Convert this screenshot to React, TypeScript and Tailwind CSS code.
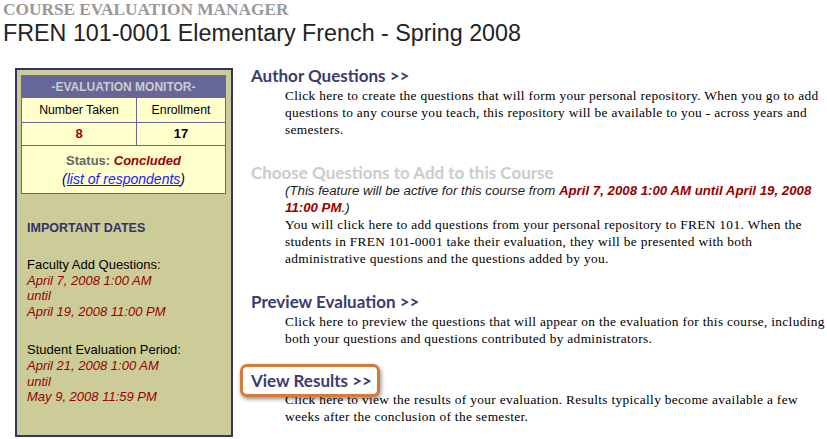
import React from "react";

const serif = { fontFamily: '"Liberation Serif", "Times New Roman", serif' };
const sans = { fontFamily: '"Liberation Sans", Arial, sans-serif' };
const head = { fontFamily: 'Lato, "Open Sans", sans-serif' };

function Heading({ children, gray }: { children: React.ReactNode; gray?: boolean }) {
  return (
    <div
      className={`text-[17px] font-bold leading-[18px] ${gray ? "text-[#cccccc]" : "text-[#3b3b6d]"}`}
      style={head}
    >
      {children}
    </div>
  );
}

function Body({ children, className = "" }: { children: React.ReactNode; className?: string }) {
  return (
    <div
      className={`ml-[34px] w-[544px] text-[13.4px] leading-[17px] tracking-[0.32px] text-black ${className}`}
      style={serif}
    >
      {children}
    </div>
  );
}

export default function App() {
  return (
    <div className="relative h-[439px] w-[827px] overflow-hidden bg-white">
      <div className="pl-[3px]">
        <div className="text-[17.3px] font-bold leading-[19px] text-[#999999]" style={serif}>
          COURSE EVALUATION MANAGER
        </div>
        <div className="mt-[0.5px] text-[23.3px] leading-[26px] text-[#222222]" style={sans}>
          FREN 101-0001 Elementary French - Spring 2008
        </div>
      </div>

      <div className="mt-[22.5px] flex items-start">
        {/* Sidebar */}
        <div
          className="ml-[15px] h-[369px] w-[218px] shrink-0 border-2 border-[#333366] bg-[#cccc99] pl-[4px] pr-[5px] pt-[5px]"
          style={sans}
        >
          <div className="border border-[#666699] bg-[#ffffcc]">
            <div className="flex h-[22px] items-center justify-center bg-[#666699] text-[12px] font-bold text-[#cccccc]">
              -EVALUATION MONITOR-
            </div>
            <div className="grid grid-cols-[115px_1fr] text-[12.3px] text-black">
              <div className="flex h-[24px] items-center justify-center border-r border-[#666699]">Number Taken</div>
              <div className="flex h-[24px] items-center justify-center">Enrollment</div>
              <div className="flex h-[23px] items-center justify-center border-r border-t border-[#666699] text-[13px] font-bold text-[#990000]">
                8
              </div>
              <div className="flex h-[23px] items-center justify-center border-t border-[#666699] text-[13px] font-bold">
                17
              </div>
            </div>
            <div className="flex h-[48px] flex-col items-center justify-center border-t border-[#666699] text-center">
              <div className="text-[13px] font-bold leading-[18px] text-[#666666]">
                Status: <span className="italic text-[#990000]">Concluded</span>
              </div>
              <div className="text-[14px] italic leading-[18px] text-[#000066]">
                (<span className="text-[#1a1aff] underline">list of respondents</span>)
              </div>
            </div>
          </div>

          <div className="mt-[26px] pl-[6px] text-[12.5px] font-bold leading-[16px] text-[#333366]">
            IMPORTANT DATES
          </div>
          <div className="mt-[21px] pl-[6px] text-[13px] leading-[15.7px]">
            <div className="text-black">Faculty Add Questions:</div>
            <div className="italic text-[#990000]">April 7, 2008 1:00 AM</div>
            <div className="italic text-[#990000]">until</div>
            <div className="italic text-[#990000]">April 19, 2008 11:00 PM</div>
          </div>
          <div className="mt-[22.5px] pl-[6px] text-[13px] leading-[15.7px]">
            <div className="text-black">Student Evaluation Period:</div>
            <div className="italic text-[#990000]">April 21, 2008 1:00 AM</div>
            <div className="italic text-[#990000]">until</div>
            <div className="italic text-[#990000]">May 9, 2008 11:59 PM</div>
          </div>
        </div>

        {/* Content */}
        <div className="ml-[18px] mt-[-1px] flex flex-col">
          <Heading>Author Questions &gt;&gt;</Heading>
          <Body className="mt-[2px]">
            Click here to create the questions that will form your personal repository. When you go to add questions to
            any course you teach, this repository will be available to you - across years and semesters.
          </Body>

          <div className="mt-[26px]">
            <Heading gray>Choose Questions to Add to this Course</Heading>
          </div>
          <div
            className="ml-[34px] w-[544px] text-[13.25px] italic leading-[17px] text-[#222222]"
            style={sans}
          >
            (This feature will be active for this course from{" "}
            <span className="font-bold text-[#990000]">April 7, 2008 1:00 AM until April 19, 2008 11:00 PM</span>.)
          </div>
          <Body>
            You will click here to add questions from your personal repository to FREN 101. When the students in FREN
            101-0001 take their evaluation, they will be presented with both administrative questions and the questions
            added by you.
          </Body>

          <div className="mt-[25.5px]">
            <Heading>Preview Evaluation &gt;&gt;</Heading>
          </div>
          <Body className="mt-[2.5px]">
            Click here to preview the questions that will appear on the evaluation for this course, including both your
            questions and questions contributed by administrators.
          </Body>

          <div className="relative mt-[24.5px] self-start">
            <div className="absolute -bottom-[7px] -left-[11px] -right-[8px] -top-[8px] z-10 rounded-[7px] border-[3px] border-[#d67a3c] bg-white shadow-[1px_2px_4px_rgba(0,0,0,0.45)]" />
            <div className="relative z-20">
              <Heading>View Results &gt;&gt;</Heading>
            </div>
          </div>
          <Body className="mt-[1.5px]">
            Click here to view the results of your evaluation. Results typically become available a few weeks after the
            conclusion of the semester.
          </Body>
        </div>
      </div>
    </div>
  );
}
